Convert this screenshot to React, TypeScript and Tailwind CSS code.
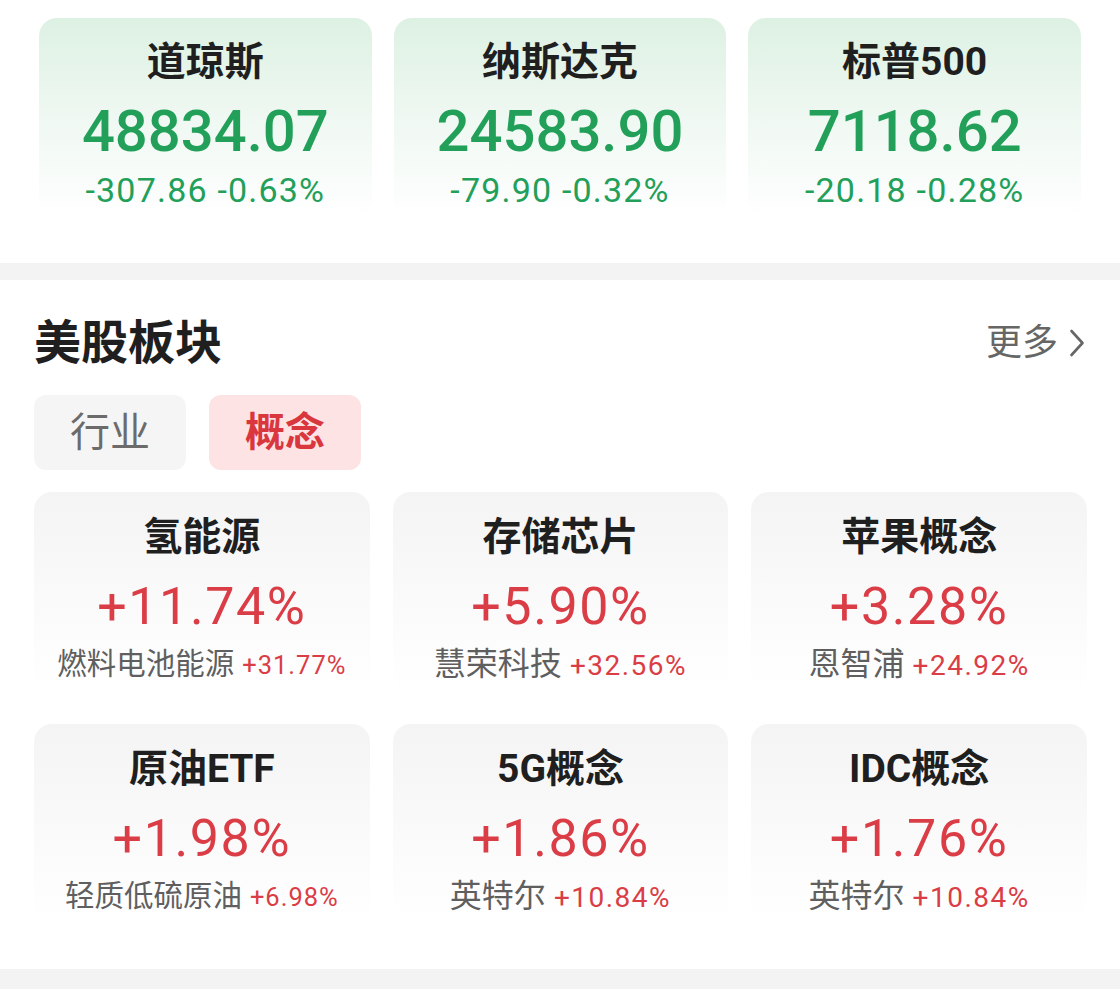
import React from 'react';

const FONT = 'font-[Roboto,"Noto_Sans_CJK_SC",sans-serif]';

interface IndexQuote {
    name: string;
    value: string;
    change: string;
}

interface Concept {
    name: string;
    pct: string;
    leader: string;
    leaderPct: string;
}

const INDICES: IndexQuote[] = [
    { name: '道琼斯', value: '48834.07', change: '-307.86 -0.63%' },
    { name: '纳斯达克', value: '24583.90', change: '-79.90 -0.32%' },
    { name: '标普500', value: '7118.62', change: '-20.18 -0.28%' },
];

const CONCEPTS: Concept[] = [
    { name: '氢能源', pct: '+11.74%', leader: '燃料电池能源', leaderPct: '+31.77%' },
    { name: '存储芯片', pct: '+5.90%', leader: '慧荣科技', leaderPct: '+32.56%' },
    { name: '苹果概念', pct: '+3.28%', leader: '恩智浦', leaderPct: '+24.92%' },
    { name: '原油ETF', pct: '+1.98%', leader: '轻质低硫原油', leaderPct: '+6.98%' },
    { name: '5G概念', pct: '+1.86%', leader: '英特尔', leaderPct: '+10.84%' },
    { name: 'IDC概念', pct: '+1.76%', leader: '英特尔', leaderPct: '+10.84%' },
];

const IndexCard: React.FC<{ quote: IndexQuote }> = ({ quote }) => (
    <div className="h-[200px] rounded-[18px] bg-gradient-to-b from-[#ddf1e3] via-[#eff8f2] to-white flex flex-col items-center pt-[22px]">
        <div className="text-[39px] leading-[44px] font-bold text-[#1f1f1f]">{quote.name}</div>
        <div className="mt-[15px] text-[58px] leading-[64px] font-medium text-[#22a05a]">{quote.value}</div>
        <div className="mt-[7px] text-[34px] leading-[40px] tracking-[1.2px] text-[#22a05a]">{quote.change}</div>
    </div>
);

const ConceptCard: React.FC<{ item: Concept }> = ({ item }) => {
    // long leader names get squeezed a little so the row fits the card
    const long = item.leader.length > 5;
    return (
        <div className="h-[200px] rounded-[18px] bg-gradient-to-b from-[#f4f4f4] to-white flex flex-col items-center pt-[23px]">
            <div className="text-[39px] leading-[44px] font-bold text-[#1f1f1f]">{item.name}</div>
            <div className="mt-[20px] text-[52px] leading-[56px] tracking-[1.6px] text-[#da3d46]">{item.pct}</div>
            <div className="mt-[12px] flex items-baseline gap-[8px] leading-[34px]">
                <span className={long ? 'text-[29.5px] text-[#5f5f5f]' : 'text-[32px] text-[#5f5f5f]'}>{item.leader}</span>
                <span className={long ? 'text-[25.5px] tracking-[1px] text-[#da3d46]' : 'text-[28px] tracking-[1.5px] text-[#da3d46]'}>{item.leaderPct}</span>
            </div>
        </div>
    );
};

const App: React.FC = () => {
    return (
        <div className={`${FONT} bg-white w-[1120px] min-h-[989px]`}>
            {/* Index cards */}
            <div className="grid grid-cols-3 gap-[22px] px-[39px] pt-[18px] pb-[45px]">
                {INDICES.map(q => <IndexCard key={q.name} quote={q} />)}
            </div>

            <div className="h-[17px] bg-[#f3f3f3]" />

            {/* US sectors */}
            <div className="px-[34px] pr-[33px] pt-[37px] pb-[45px]">
                <div className="flex items-center justify-between leading-[52px]">
                    <h2 className="text-[47px] font-bold text-[#1f1f1f]">美股板块</h2>
                    <div className="flex items-center gap-[11px] pr-[2px] text-[36px] text-[#666]">
                        <span>更多</span>
                        <svg width="16" height="28" viewBox="0 0 16 28" fill="none">
                            <path d="M2.5 2 L13.5 14 L2.5 26" stroke="#666" strokeWidth="2.6" strokeLinecap="round" strokeLinejoin="round" />
                        </svg>
                    </div>
                </div>

                <div className="mt-[26px] flex gap-[23px]">
                    <button className="w-[152px] h-[75px] rounded-[12px] bg-[#f5f5f5] text-[40px] text-[#6b6b6b]">行业</button>
                    <button className="w-[152px] h-[75px] rounded-[12px] bg-[#fde3e4] text-[40px] font-bold text-[#d9363e]">概念</button>
                </div>

                <div className="mt-[22px] grid grid-cols-3 gap-x-[23px] gap-y-[32px]">
                    {CONCEPTS.map(c => <ConceptCard key={c.name} item={c} />)}
                </div>
            </div>

            <div className="h-[20px] bg-[#f3f3f3]" />
        </div>
    );
};

export default App;
